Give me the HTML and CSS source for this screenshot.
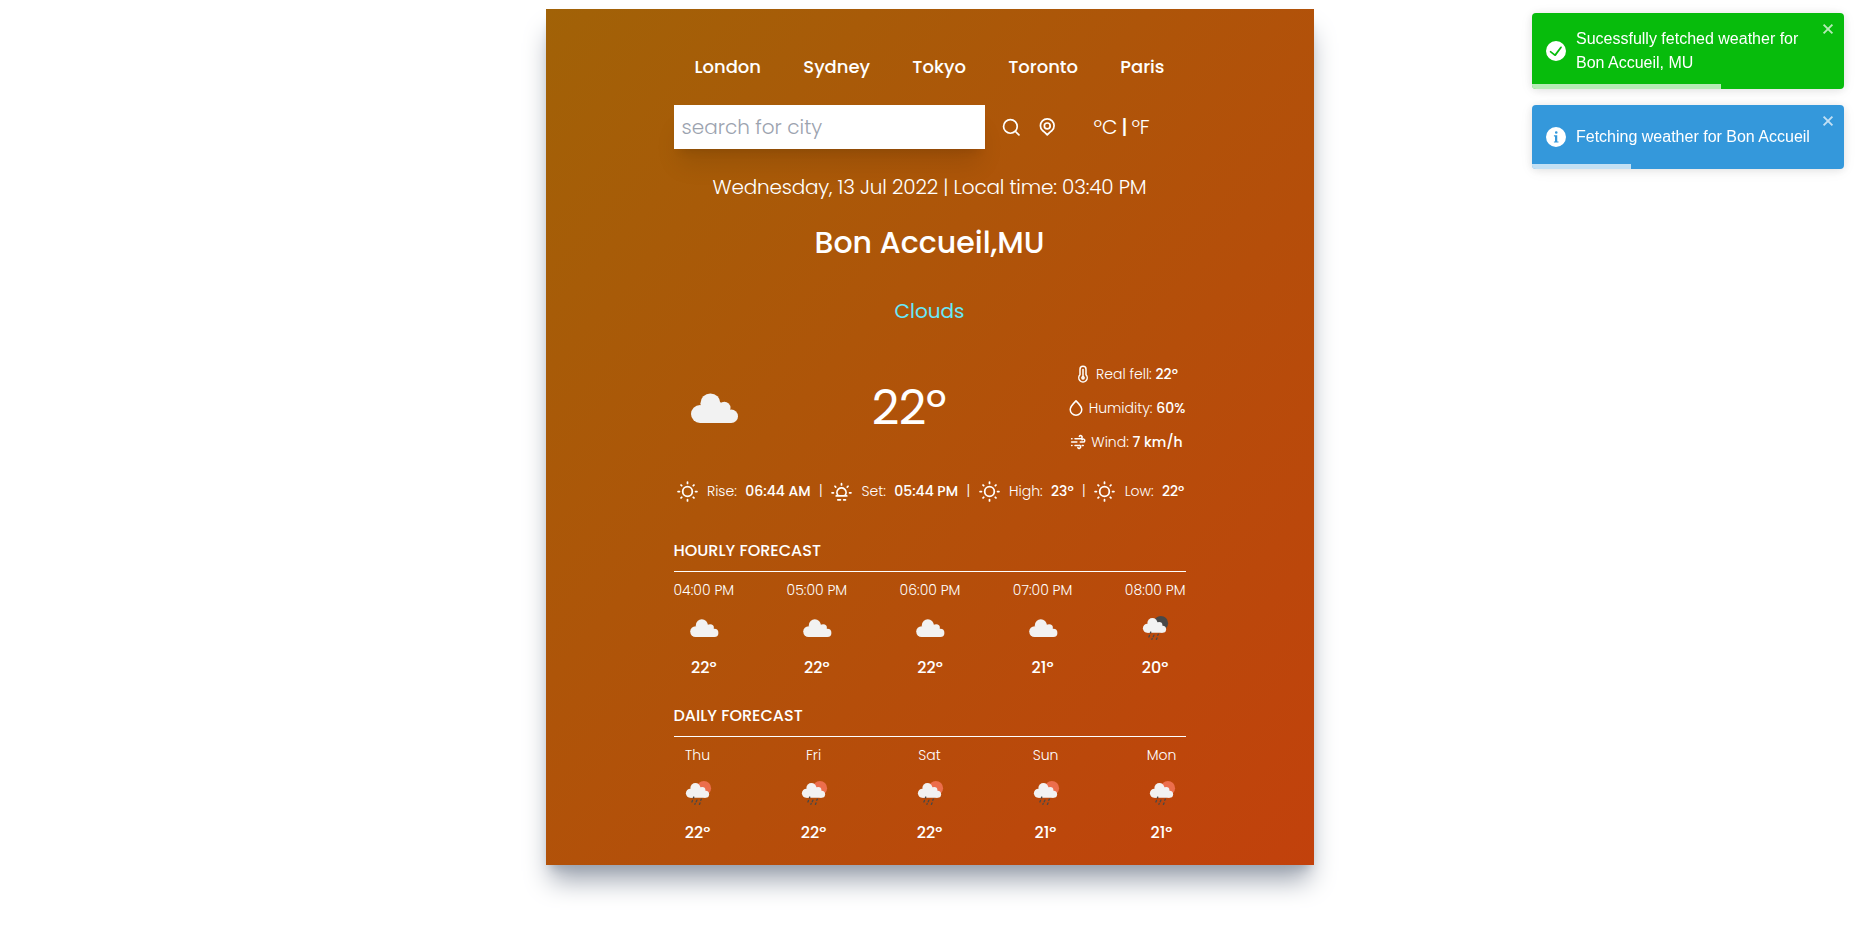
FILE: index.html
```html
<!DOCTYPE html>
<html lang="en">
<head>
<meta charset="utf-8">
<title>Weather</title>
<link rel="stylesheet" href="styles.css">
</head>
<body>
<svg class="defs" aria-hidden="true">
  <symbol id="cloud" viewBox="0 0 80 80"><g fill="#f2f2f2"><circle cx="26" cy="46" r="9"/><circle cx="36.4" cy="35.4" r="10"/><circle cx="50.3" cy="40" r="6.2"/><circle cx="57.2" cy="48.2" r="6.8"/><path d="M26 55V42L46 34l10 8 1.2 13z"/></g></symbol>
  <symbol id="rain" viewBox="0 0 48 48"><circle cx="29.900" cy="19.200" r="7.200" fill="currentColor"/><g fill="#f2f2f2"><circle cx="16.400" cy="24.300" r="4.500"/><circle cx="21.400" cy="19" r="5"/><circle cx="28.200" cy="21.300" r="3.200"/><circle cx="31.600" cy="25.300" r="3.500"/><path d="M16.400 28.800V22l9.600-4 5.400 5 .2 5.800z"/></g><path d="M19.800 28l-.3 1M18.500 31.400l-.6 1.600M22.900 31.200l-.7 1.600M27.300 30.200l-.5 1.100M21.200 34.500l-.3.8M26 33.900l-.6 1.500" fill="none" stroke="#484848" stroke-width="1.300" stroke-linecap="round"/></symbol>
  <symbol id="sun" viewBox="0 0 24 24"><g fill="none" stroke="currentColor" stroke-width="2" stroke-linecap="round"><circle cx="12" cy="12" r="5.5"/><path d="M12 1.2v1.6M12 21.2v1.6M1.2 12h1.6M21.2 12h1.6M4.6 4.6l.8.8M18.6 18.6l.8.8M4.6 19.4l.8-.8M18.6 5.4l.8-.8"/></g></symbol>
  <symbol id="sunset" viewBox="0 0 24 24"><g fill="none" stroke="currentColor" stroke-width="2" stroke-linecap="round" stroke-linejoin="round"><path d="M6 17h12M8 16.500a5.200 5.200 0 1 1 8 0M12 3v1.500M1.200 13.500h1.600M21.200 13.500h1.600M4.500 6l.9.9M18.600 6.900l.9-.9M7.800 21.500h3M14.500 21.500h2"/></g></symbol>
</svg>
<main class="card">
  <nav class="cities"><a>London</a><a>Sydney</a><a>Tokyo</a><a>Toronto</a><a>Paris</a></nav>
  <div class="search">
    <div class="search-left">
      <input class="field" type="text" placeholder="search for city">
      <svg class="tool" viewBox="0 0 24 24"><g fill="none" stroke="currentColor" stroke-width="2" stroke-linecap="round"><circle cx="11" cy="11" r="8"/><path d="M17 17l4 4"/></g></svg>
      <svg class="tool" viewBox="0 0 24 24"><g fill="none" stroke="currentColor" stroke-width="2" stroke-linejoin="round"><path d="M12 21l-2.600-2.800-3-2.400a8 8 0 1 1 11.200 0l-3 2.400z"/><circle cx="12" cy="10.400" r="3.400"/></g></svg>
    </div>
    <div class="units"><span>ºC</span><b>|</b><span>ºF</span></div>
  </div>
  <p class="date">Wednesday, 13 Jul 2022 | Local time: 03:40 PM</p>
  <h1 class="place">Bon Accueil,MU</h1>
  <p class="condition">Clouds</p>
  <section class="current">
    <svg class="big-icon"><use href="#cloud"/></svg>
    <p class="temp">22º</p>
    <div class="details">
      <div class="detail"><svg viewBox="0 0 24 24"><g fill="none" stroke="currentColor" stroke-width="2" stroke-linecap="round"><path d="M8 13V5.500a4 4 0 0 1 8 0V13a5.600 5.600 0 1 1-8 0z"/><path d="M12 6v10"/><circle cx="12" cy="17" r="1.500"/></g></svg><span>Real fell: <b>22º</b></span></div>
      <div class="detail"><svg viewBox="0 0 24 24"><path d="M12 2.500C9 5.500 4.300 9.600 4.300 14a7.700 7.700 0 0 0 15.400 0C19.700 9.600 15 5.500 12 2.500z" fill="none" stroke="currentColor" stroke-width="2" stroke-linejoin="round"/></svg><span>Humidity: <b>60%</b></span></div>
      <div class="detail"><svg viewBox="0 0 24 24"><g fill="none" stroke="currentColor" stroke-width="2" stroke-linecap="round"><path d="M3.500 7.500H4M8 7.500h7.500a2 2 0 1 0-1.700-3M3.500 12h7M15 12h4a2 2 0 1 0-1.700-3M3.500 16.500H4M8 16.500h5.500a2 2 0 1 1-1.700 3M17.500 16.500H19"/></g></svg><span>Wind: <b>7 km/h</b></span></div>
    </div>
  </section>
  <section class="facts">
    <svg><use href="#sun"/></svg><span>Rise:</span><b>06:44 AM</b><i>|</i>
    <svg><use href="#sunset"/></svg><span>Set:</span><b>05:44 PM</b><i>|</i>
    <svg><use href="#sun"/></svg><span>High:</span><b>23º</b><i>|</i>
    <svg><use href="#sun"/></svg><span>Low:</span><b>22º</b>
  </section>
  <section class="forecast">
    <h2>HOURLY FORECAST</h2>
    <div class="slots">
      <div class="slot"><span>04:00 PM</span><svg><use href="#cloud"/></svg><b>22º</b></div>
      <div class="slot"><span>05:00 PM</span><svg><use href="#cloud"/></svg><b>22º</b></div>
      <div class="slot"><span>06:00 PM</span><svg><use href="#cloud"/></svg><b>22º</b></div>
      <div class="slot"><span>07:00 PM</span><svg><use href="#cloud"/></svg><b>21º</b></div>
      <div class="slot"><span>08:00 PM</span><svg class="night"><use href="#rain"/></svg><b>20º</b></div>
    </div>
  </section>
  <section class="forecast">
    <h2>DAILY FORECAST</h2>
    <div class="slots">
      <div class="slot"><span>Thu</span><svg class="day"><use href="#rain"/></svg><b>22º</b></div>
      <div class="slot"><span>Fri</span><svg class="day"><use href="#rain"/></svg><b>22º</b></div>
      <div class="slot"><span>Sat</span><svg class="day"><use href="#rain"/></svg><b>22º</b></div>
      <div class="slot"><span>Sun</span><svg class="day"><use href="#rain"/></svg><b>21º</b></div>
      <div class="slot"><span>Mon</span><svg class="day"><use href="#rain"/></svg><b>21º</b></div>
    </div>
  </section>
</main>
<aside class="toasts">
  <div class="toast success">
    <svg class="status" viewBox="0 0 24 24"><path fill="#fff" d="M12 0a12 12 0 1 0 12 12A12 12 0 0 0 12 0zm6.900 8.200l-6.800 9.200a1.500 1.500 0 0 1-2.100.3l-4.900-3.900a1 1 0 1 1 1.200-1.500l4.300 3.400L17 7.100a1 1 0 1 1 1.900 1.100z"/></svg>
    <p>Sucessfully fetched weather for Bon Accueil, MU</p>
    <svg class="close" viewBox="0 0 14 16"><path d="M2.600 3.600l8.800 8.800M11.400 3.600l-8.800 8.800" stroke="#fff" stroke-width="1.900"/></svg>
    <div class="progress"></div>
  </div>
  <div class="toast info">
    <svg class="status" viewBox="0 0 24 24"><path fill="#fff" fill-rule="evenodd" d="M12 0a12 12 0 1 0 0 24 12 12 0 0 0 0-24zm.2 5a1.600 1.600 0 1 1-1.500 1.500A1.500 1.500 0 0 1 12.200 5zM15 18.500H9.500v-1.200h1.300v-6H9.500v-1.300h4v7.300H15z"/></svg>
    <p>Fetching weather for Bon Accueil</p>
    <svg class="close" viewBox="0 0 14 16"><path d="M2.600 3.600l8.800 8.800M11.400 3.600l-8.800 8.800" stroke="#fff" stroke-width="1.900"/></svg>
    <div class="progress"></div>
  </div>
</aside>
</body>
</html>
```
FILE: styles.css
```css
* { box-sizing: border-box; }
body { margin: 0; padding-top: 9px; min-height: 934px; background: #fff; font-family: Poppins, Inter, sans-serif; color: #fff; }
p, h1, h2 { margin: 0; font-weight: inherit; }
svg { display: block; flex: none; }
b { font-weight: 500; }
.defs { position: absolute; width: 0; height: 0; }
.card { width: 768px; height: 856px; margin: 0 auto; padding: 44px 128px 0; background: linear-gradient(to bottom right, #a16207, #c2410c); box-shadow: 0 20px 25px -5px #9ca3af, 0 8px 10px -6px #9ca3af; }
.cities { display: flex; justify-content: space-between; padding: 0 21px; font-size: 18px; line-height: 28px; font-weight: 500; }
.search { display: flex; margin-top: 24px; }
.search-left { width: 384px; display: flex; align-items: center; gap: 16px; }
.field { width: 311px; height: 44px; padding: 8px; border: 0; outline: 0; font: 300 20px/28px Poppins, Inter, sans-serif; box-shadow: 0 20px 25px -5px rgba(0,0,0,.1), 0 8px 10px -6px rgba(0,0,0,.1); }
.field::placeholder { color: #9ca3af; }
.tool { width: 20.5px; height: 20.5px; }
.units { width: 128px; display: flex; align-items: center; justify-content: center; gap: 4px; font-size: 20px; font-weight: 300; letter-spacing: -.2px; }
.date { margin-top: 24px; text-align: center; font-size: 20px; line-height: 28px; font-weight: 300; letter-spacing: -.19px; }
.place { margin-top: 24px; text-align: center; font-size: 30px; line-height: 36px; font-weight: 500; }
.condition { margin-top: 36px; text-align: center; font-size: 20px; line-height: 28px; color: #67e8f9; }
.current { height: 88px; margin-top: 39px; display: flex; justify-content: space-between; align-items: center; }
.big-icon { width: 80px; height: 80px; }
.temp { padding-right: 2px; font-size: 48px; line-height: 48px; letter-spacing: -.5px; }
.details { width: 119px; display: flex; flex-direction: column; align-items: center; gap: 14px; }
.detail { display: flex; align-items: center; gap: 4px; font-size: 14px; line-height: 20px; font-weight: 300; white-space: nowrap; }
.detail svg { width: 18px; height: 18px; }
.facts { margin-top: 28px; height: 22px; padding: 0 1px 0 3px; display: flex; align-items: center; justify-content: space-between; font-size: 14px; line-height: 20px; font-weight: 300; white-space: nowrap; }
.facts svg { width: 21px; height: 21px; }
.facts span { margin-left: 1px; }
.facts i { font-style: normal; }
.forecast { margin-top: 39px; height: 126px; }
.forecast h2 { height: 31px; border-bottom: 1px solid #fff; font-size: 16px; line-height: 20px; font-weight: 500; }
.slots { display: flex; justify-content: space-between; margin-top: 8px; }
.slot { display: flex; flex-direction: column; align-items: center; min-width: 48px; font-size: 14px; line-height: 20px; font-weight: 300; }
.slot svg { width: 48px; height: 48px; margin: 4px 0; }
.slot b { font-size: 16px; line-height: 24px; }
.night { color: #484848; }
.day { color: #ec6e4c; }
.toasts { position: fixed; top: 13px; right: 15px; width: 312px; display: flex; flex-direction: column; gap: 16px; font: 16px/24px "Liberation Sans", Arial, sans-serif; }
.toast { position: relative; display: flex; align-items: center; height: 64px; padding: 8px 14px; border-radius: 4px; overflow: hidden; box-shadow: 0 1px 10px rgba(0,0,0,.1), 0 2px 15px rgba(0,0,0,.05); }
.toast p { width: 238px; margin-left: 10px; }
.success { height: 76px; background: #07bc0c; }
.info { background: #3498db; }
.status { width: 20px; height: 20px; }
.close { position: absolute; top: 8px; right: 9px; width: 14px; height: 16px; opacity: .7; }
.progress { position: absolute; left: 0; bottom: 0; height: 5px; width: 189px; background: rgba(255,255,255,.7); }
.info .progress { width: 99px; }
```
